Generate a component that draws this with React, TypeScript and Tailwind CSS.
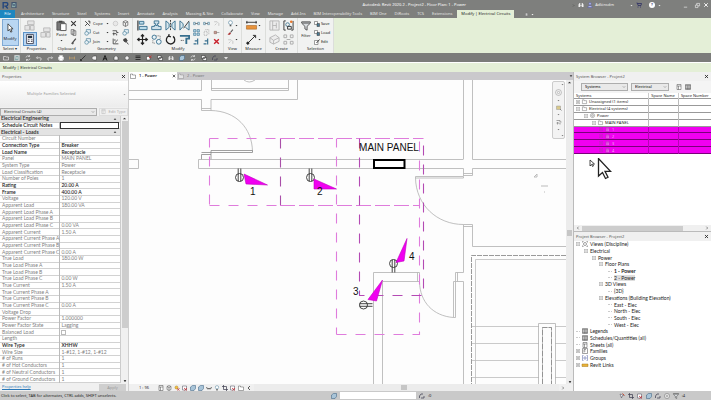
import type { ReactNode } from 'react'
import { ChevronDown, X } from 'lucide-react'

type PropRow = { k: string; v?: string; on?: boolean; head?: boolean }

const propRows: PropRow[] = [
  { k: 'Electrical Engineering', head: true },
  { k: 'Schedule Circuit Notes', on: true },
  { k: 'Electrical - Loads', head: true },
  { k: 'Circuit Number' },
  { k: 'Connection Type', v: 'Breaker', on: true },
  { k: 'Load Name', v: 'Receptacle', on: true },
  { k: 'Panel', v: 'MAIN PANEL' },
  { k: 'System Type', v: 'Power' },
  { k: 'Load Classification', v: 'Receptacle' },
  { k: 'Number of Poles', v: '1' },
  { k: 'Rating', v: '20.00 A', on: true },
  { k: 'Frame', v: '400.00 A', on: true },
  { k: 'Voltage', v: '120.00 V' },
  { k: 'Apparent Load', v: '180.00 VA' },
  { k: 'Apparent Load Phase A' },
  { k: 'Apparent Load Phase B' },
  { k: 'Apparent Load Phase C', v: '0.00 VA' },
  { k: 'Apparent Current', v: '1.50 A' },
  { k: 'Apparent Current Phase A' },
  { k: 'Apparent Current Phase B' },
  { k: 'Apparent Current Phase C', v: '0.00 A' },
  { k: 'True Load', v: '180.00 W' },
  { k: 'True Load Phase A' },
  { k: 'True Load Phase B' },
  { k: 'True Load Phase C', v: '0.00 W' },
  { k: 'True Current', v: '1.50 A' },
  { k: 'True Current Phase A' },
  { k: 'True Current Phase B' },
  { k: 'True Current Phase C', v: '0.00 A' },
  { k: 'Voltage Drop' },
  { k: 'Power Factor', v: '1.000000' },
  { k: 'Power Factor State', v: 'Lagging' },
  { k: 'Balanced Load' },
  { k: 'Length' },
  { k: 'Wire Type', v: 'XHHW', on: true },
  { k: 'Wire Size', v: '1-#12, 1-#12, 1-#12' },
  { k: '# of Runs', v: '1' },
  { k: '# of Hot Conductors', v: '1' },
  { k: '# of Neutral Conductors', v: '1' },
  { k: '# of Ground Conductors', v: '1' },
]

const ribbonTabs = [
  'Architecture', 'Structure', 'Steel', 'Systems', 'Insert', 'Annotate', 'Analysis', 'Massing & Site',
  'Collaborate', 'View', 'Manage', 'Add-Ins', 'BIM Interoperability Tools', 'BIM One', 'DiRoots', 'TCS', 'Extensions',
]

// every drawing sits on a 12 x 12 grid
const art: Record<string, ReactNode> = {
  arrow: <path d="M3.5 1v8.5l2-1.8 1.4 3.3 1.5-.7L7 7h2.7z" fill="#fff" stroke="#333" />,
  typeProps: <g stroke="#b9b9b9" fill="#e4e4e4"><path d="M4 1h7v4H4zM1 6h5v5H1zM7 6h4v5H7z" /></g>,
  props: <g><path d="M2 .5h8v11H2z" fill="#fff" stroke="#334" /><path d="M3.5 2h5v3h-5z" fill="#234" /><path d="M3.5 7h2M3.5 9h2M7 7h2M7 9h2" stroke="#334" /></g>,
  paste: <g><path d="M1 2h8v9H1z" fill="#777" stroke="#555" /><path d="M3 .8h4v2H3z" fill="#444" /><path d="M5 4h6v7.5H5z" fill="#fff" stroke="#555" /></g>,
  cutX: <path d="M2 2l8 8M10 2L5 7M2 10l3-3M8 8l2 2" stroke="#333" strokeWidth="1.8" />,
  copy: <path d="M2 1h5v8H2zM5 3h5v8H5z" fill="#eee" stroke="#444" />,
  brush: <g><path d="M10 1L5.5 6.5" stroke="#444" strokeWidth="2" /><path d="M2 10l2-4 3 2-2 3z" fill="#555" /></g>,
  cope: <path d="M2 2l8 8M2 10l4-4M7 2h3v4" fill="none" stroke="#333" strokeWidth="1.5" />,
  join: <g fill="#e6f0f5" stroke="#3d7591"><path d="M4 1h7v6H4z" /><circle cx="4.5" cy="7.5" r="3.2" /></g>,
  ghost: <circle cx="6" cy="6" r="4" fill="#e8e8e8" stroke="#bbb" />,
  cube: <path d="M2 3l4-2 4 2v6l-4 2-4-2zM2 3l4 2 4-2M6 5v6" fill="#eee" stroke="#444" />,
  wall: <path d="M1 3h7v3h3M3 6v5M1 8h6M8 8v3" fill="none" stroke="#444" strokeWidth="1.5" />,
  split: <path d="M2 1v9h9M5 8l5-5M5 2v3" fill="none" stroke="#444" strokeWidth="1.5" />,
  hammer: <path d="M3 2l4-1 2 4-3 2-3-2zM7 6l4 5" fill="#444" stroke="#444" strokeWidth="1.5" />,
  align: <g><path d="M1 .5v11" stroke="#333" strokeWidth="1.3" /><path d="M2.5 1.5h5v3h-5zM2.5 7h8.5v3.5H2.5z" fill="#bcdcea" stroke="#38708f" /></g>,
  offset: <g fill="#cfe2ec" stroke="#38708f"><path d="M3.5 1h5v3H7v2H5V4H3.5zM.8 7h3V5.5M8 5.5V7h3v3.5H.8V7" /></g>,
  mirror: <g><path d="M6 0v12" stroke="#333" strokeDasharray="2 1" /><path d="M1 1v10l3.500-3V4zM11 1v10L7.500 8V4z" fill="#d8e8ef" stroke="#38708f" /></g>,
  mirrorDraw: <g><path d="M1 1v10l3.500-4V4zM11 2v9L7 8" fill="#d8e8ef" stroke="#38708f" /><path d="M11 1L5 9" stroke="#333" /></g>,
  move: <path d="M6 1v10M1 6h10M4.3 2.7L6 .7l1.7 2M4.3 9.3l1.7 2 1.7-2M2.7 4.3L.7 6l2 1.7M9.3 4.3l2 1.7-2 1.7" fill="none" stroke="#222" strokeWidth="1.3" />,
  copy2: <g fill="#e9f3f7" stroke="#38708f"><circle cx="3.5" cy="3.5" r="2.3" /><circle cx="8.5" cy="8.5" r="2.6" /><path d="M6 2h4v3M2 7v3h3" fill="none" stroke="#666" strokeDasharray="1 1" /></g>,
  rotate: <path d="M4 2.2a4.6 4.6 0 1 0 4.8.4M4.5.2L4 2.4l2.4.8" fill="none" stroke="#222" strokeWidth="1.4" />,
  trim: <g><path d="M1 2h10v3H8v6" fill="none" stroke="#38708f" strokeWidth="2" /><path d="M2 7h4" stroke="#333" strokeDasharray="1 1" /></g>,
  dashes: <g stroke="#497b94" fill="#d8e8ef"><path d="M1 4h3v4H1zM8 4h3v4H8z" /><path d="M4 6h4" stroke="#333" /></g>,
  array: <g fill="#b5d8e7" stroke="#38708f"><path d="M1 1h4v4H1zM7 1h4v4H7zM1 7h4v4H1zM7 7h4v4H7z" /></g>,
  scale: <path d="M2 4h5v7H2zM4 1h6v8" fill="none" stroke="#999" strokeDasharray="2 1" />,
  trimOne: <path d="M1 10h5M8 1v10M3 5h4" fill="none" stroke="#38708f" strokeWidth="2" />,
  pinOff: <path d="M2 3h5l3 3v4M3 9l3-3" fill="none" stroke="#bbb" strokeWidth="1.3" />,
  pin: <g><path d="M2 4h4v4H2z" fill="#c99" stroke="#865" /><path d="M6 6h5" stroke="#777" /></g>,
  del: <path d="M2 2l8 8M10 2l-8 8" stroke="#c8202b" strokeWidth="2.4" />,
  bulb: <g><circle cx="6" cy="4.5" r="3.3" fill="#fff" stroke="#4b7d99" /><path d="M4.6 8.2h2.8v2.6H4.6z" fill="#555" /></g>,
  paint: <g><path d="M10 1L6 6" stroke="#555" strokeWidth="1.8" /><path d="M1 10l3-4 3 1-2 3z" fill="#a33" /></g>,
  dim: <g><path d="M0 2.5h12M1 1v3M11 1v3" stroke="#333" /><path d="M.5 6h11v4H.5z" fill="#e8933c" stroke="#a45e18" strokeWidth=".6" /></g>,
  dimAlign: <g stroke="#222"><path d="M2 10L10 2" /><circle cx="2" cy="10" r="1.2" fill="#222" /><path d="M7.5 1.5h3v3" fill="none" /></g>,
  assembly: <path d="M1 1h10v10H1zM4 1v10M8 3v6M4 6h4" fill="#ececec" stroke="#b5b5b5" />,
  parts: <path d="M1 4l6-3 4 3-6 3zM1 4v5l4 2V7M11 4v4l-6 3" fill="#ececec" stroke="#b5b5b5" />,
  group: <g fill="none" stroke="#333"><path d="M3 1H1v10h2M9 11h2V1" /><circle cx="5" cy="5" r="2" stroke="#497b94" /><path d="M5 7h4v3H5z" /><circle cx="9" cy="2" r="1.4" fill="#e8782c" stroke="none" /></g>,
  similar: <path d="M1 1h3v3H1zM8 1h3v3H8zM1 8h3v3H1zM8 8h3v3H8zM4 6h4" fill="none" stroke="#aaa" />,
  filter: <g><path d="M.8 1h10.4v1.6L7.3 6.4V11L4.7 9.5V6.4L.8 2.6z" fill="#d9dde0" stroke="#444" /><path d="M1.5 2.5h9" stroke="#444" /></g>,
  sel: <g><path d="M1 1h6v6H1z" fill="#fff" stroke="#444" /><path d="M6 5h5v6H6z" fill="#497b94" stroke="#333" /></g>,
  selEdit: <g><path d="M1 3h7v8H1z" fill="#fff" stroke="#444" /><path d="M11 1L5 8" stroke="#333" strokeWidth="1.8" /></g>,
  open: <path d="M1 3h4l1 1h5v6H1z" fill="none" stroke="currentColor" strokeWidth="1.4" />,
  save: <path d="M1 1h10v10H1zM3 1h6v4H3zM3 7h6v4" fill="#8aa" stroke="currentColor" />,
  sync: <path d="M2 5a4 4 0 0 1 7-2M10 7a4 4 0 0 1-7 2M9 0v3H6M3 12V9h3" fill="none" stroke="currentColor" strokeWidth="1.4" />,
  undo: <path d="M3 3L1 5.5 3.5 8M1 5.5h7a2.5 2.5 0 0 1 0 5" fill="none" stroke="currentColor" strokeWidth="1.4" />,
  redo: <path d="M9 3l2 2.5L8.500 8M11 5.500H4a2.500 2.500 0 0 0 0 5" fill="none" stroke="currentColor" strokeWidth="1.4" />,
  print: <path d="M3 1h6v3h2v5H9v2H3V9H1V4h2zM3 9V7h6v2" fill="#fff" stroke="currentColor" />,
  ruler: <path d="M1 3v6M11 3v6M1 6h10" stroke="#c9a56c" strokeWidth="1.4" />,
  line: <path d="M1 11L11 1M1 8v3h3" fill="none" stroke="#222" strokeWidth="1.5" />,
  tag: <path d="M1 6l4-4h6v8H5z" fill="#eee" stroke="#333" />,
  letter: <path d="M2 11L6 1l4 10M3.500 7.500h5" fill="none" stroke="#1c1c1c" strokeWidth="2" />,
  view3d: <path d="M2 5l4-4 4 4v5H2z" fill="#eee" stroke="#333" />,
  section: <path d="M6 1l5 5-5 5-5-5z" fill="#eee" stroke="#333" />,
  thin: <path d="M1 2h10M1 5h10M1 9h10" stroke="#222" strokeWidth="1.6" />,
  closeWin: <g><path d="M1 3h7v7H1z" fill="#fff" stroke="#333" /><path d="M6 1l5 5M11 1L6 6" stroke="#c33" strokeWidth="1.600" /></g>,
  wins: <path d="M1 1h7v6H1zM4 5h7v6H4z" fill="#eee" stroke="#222" />,
  find: <path d="M1 10V5l2-3h1.500v4h3V2H9l2 3v5H7.500V7h-3v3z" fill="currentColor" />,
  user: <g fill="#b8c0e8" stroke="#4b4f9a"><circle cx="6" cy="3.500" r="2.500" /><path d="M1.500 11c0-5 9-5 9 0z" /></g>,
  cart: <path d="M1 2h2l1 5h6l1-4H3.500M4 9v2M9 9v2" fill="none" stroke="#2d2f63" strokeWidth="1.600" />,
  min: <path d="M2 10h8" stroke="currentColor" strokeWidth="1.500" />,
  restore: <path d="M1 5h6v6H1zM4 5V1h7v6H7" fill="none" stroke="currentColor" strokeWidth="1.500" />,
  folder: <path d="M1 2h4v2h6v7H1z" fill="#fff" stroke="#555" />,
  sheet: <path d="M2 1h8v10H2zM2 4h8M5 4v7" fill="#fff" stroke="#444" />,
  grid: <path d="M1 1h10v10H1zM1 3h10M1 6h10M1 9h10M4.500 3v8M8 3v8" fill="#fff" stroke="#444" />,
  target: <g fill="#fff" stroke="#555"><circle cx="6" cy="6" r="5" /><circle cx="6" cy="6" r="2" /></g>,
  viewRoot: <g fill="none" stroke="#444"><circle cx="6" cy="6" r="3" /><path d="M1 3V1h2M9 1h2v2M11 9v2H9M3 11H1V9" /></g>,
  link: <path d="M0 4h12v5H0z" fill="#e9b23a" stroke="#a5791a" />,
  bracket: <path d="M3 1H1v10h2M9 1h2v10H9M4 4h4v4H4z" fill="none" stroke="#4b5ba0" />,
  family: <path d="M1 1h10v10H1zM4 9V3h4M4 6h3" fill="#fff" stroke="#444" />,
  sun: <g><circle cx="5" cy="5" r="3" fill="#f3c342" stroke="#a87a16" /><path d="M6 7l5 4M11 6L7 11" stroke="#b33" strokeWidth="1.400" /></g>,
  crop: <path d="M3 0v9h9M0 3h9v9" fill="none" stroke="#445" strokeWidth="1.500" />,
  redBox: <g><path d="M1 2h8v8H1z" fill="#fff" stroke="#445" /><path d="M4 6l6 5M10 6l-5 5" stroke="#c3343a" strokeWidth="1.600" /></g>,
  zoomBox: <g><path d="M1 2h8v7H1z" fill="#d9c98a" stroke="#999" /><path d="M8 8l3 3" stroke="#777" strokeWidth="1.600" /></g>,
  blueBox: <path d="M1 4l4-3h6v6l-3 4H1z" fill="#a8c4d8" stroke="#335a7c" />,
  glasses: <path d="M1 4l2 4h2l1-2 1 2h2l2-4" fill="none" stroke="#333" strokeWidth="1.400" />,
  chev: <path d="M8 2L4 6l4 4" fill="none" stroke="#333" strokeWidth="1.600" />,
  chevR: <path d="M4 2l4 4-4 4" fill="none" stroke="#333" strokeWidth="1.600" />,
  up: <path d="M2 8l4-4 4 4z" fill="#333" />,
  caret: <path d="M2 4h8L6 9z" fill="currentColor" />,
  pick: <g><path d="M2 2l7 3-3 1-1 4z" fill="#fff" stroke="#445" /><path d="M7 1l4 4" stroke="#cc4a32" strokeWidth="2" /></g>,
  handle: <path d="M1 10V6l3-4h4M4 10h6V6" fill="none" stroke="#445" strokeWidth="1.500" />,
}

function Ico({ n, c }: { n: string; c: string }) {
  return <svg viewBox="0 0 12 12" className={`block shrink-0 overflow-visible ${c}`}>{art[n]}</svg>
}

function Btn({ n, label, c = 'size-[7px]' }: { n: string; label: string; c?: string }) {
  return <button aria-label={label} className="flex items-center justify-center"><Ico n={n} c={c} /></button>
}

function Panel({ title, c, children }: { title: string; c: string; children: ReactNode }) {
  return (
    <section className={`flex shrink-0 flex-col border-r border-[#dcdedb] bg-[#f1f2f1] pt-px ${c}`}>
      <div className="flex flex-1 justify-center gap-[3px]">{children}</div>
      <h2 className="pb-px text-center font-normal leading-[6px]">{title}</h2>
    </section>
  )
}

function Stack({ items }: { items: string[] }) {
  return (
    <div className="flex flex-col justify-around">
      {items.map((n, i) => <Btn key={i} n={n} label={n} />)}
    </div>
  )
}

function Pair({ a, b }: { a: string; b: string }) {
  return (
    <div className="flex flex-col justify-around">
      <Btn n={a} label={a} c="size-[11px]" />
      <Btn n={b} label={b} c="size-[11px]" />
    </div>
  )
}

// drop-down arrows at the right of a panel's two button rows
function Carets() {
  return (
    <div className="-ml-0.5 flex flex-col justify-around">
      <Ico n="caret" c="size-[3px]" />
      <Ico n="caret" c="size-[3px]" />
    </div>
  )
}

function Drop({ label, value, c }: { label: string; value: string; c: string }) {
  return (
    <div className={`relative flex ${c}`}>
      <select aria-label={label} defaultValue={value} className="w-full appearance-none border border-[#adadad] bg-[#e9e9e9] px-[3px] leading-[6px]">
        <option>{value}</option>
      </select>
      <ChevronDown className="pointer-events-none absolute right-0.5 top-0.5 size-1 text-[#444]" />
    </div>
  )
}

function Ribbon() {
  return (
    <div className="flex h-[35px] bg-[#e4efd7] text-[#222]">
      <Panel title="Select ▾" c="w-[21px]">
        <button className="flex w-[17px] flex-col items-center justify-center gap-[3px] border border-[#7fa9d4] bg-[#b9d6f2]">
          <Ico n="arrow" c="size-[10px]" />
          Modify
        </button>
      </Panel>
      <Panel title="Properties" c="w-8">
        <div className="flex flex-col justify-around">
          <Btn n="typeProps" label="Type Properties" c="size-[11px]" />
          <button aria-label="Properties" className="border border-[#5c93c9] bg-[#b9d6f2] px-px py-px"><Ico n="props" c="size-[10px]" /></button>
        </div>
        <Btn n="typeProps" label="Family Types" c="size-[11px]" />
      </Panel>
      <Panel title="Clipboard" c="w-7">
        <button className="flex flex-col items-center gap-px pt-px">
          <Ico n="paste" c="size-[11px]" />
          Paste
          <Ico n="caret" c="size-[3px]" />
        </button>
        <Stack items={['cutX', 'copy', 'brush']} />
      </Panel>
      <Panel title="Geometry" c="w-[52px]">
        <div className="flex flex-col justify-around">
          {[['cope', 'Cope'], ['join', 'Cut'], ['join', 'Join']].map(([n, t]) => (
            <button key={t} className="flex w-[25px] items-center gap-0.5">
              <Ico n={n} c="size-[7px]" />
              <span className="w-[11px] text-left">{t}</span>
              <Ico n="caret" c="size-[3px]" />
            </button>
          ))}
        </div>
        <Stack items={['ghost', 'wall', 'split']} />
        <Stack items={['cube', 'join', 'hammer']} />
      </Panel>
      <Panel title="Modify" c="w-[91px]">
        <Pair a="align" b="move" />
        <Pair a="offset" b="copy2" />
        <Pair a="mirror" b="rotate" />
        <Pair a="mirrorDraw" b="trim" />
        <Stack items={['dashes', 'array', 'trimOne']} />
        <Stack items={['dashes', 'scale', 'trimOne']} />
        <Stack items={['pinOff', 'pin', 'del']} />
      </Panel>
      <Panel title="View" c="w-[18px]">
        <Stack items={['bulb', 'paint', 'pinOff']} />
        <Carets />
      </Panel>
      <Panel title="Measure" c="w-6">
        <Pair a="dim" b="dimAlign" />
        <Carets />
      </Panel>
      <Panel title="Create" c="w-8">
        <Pair a="assembly" b="parts" />
        <Pair a="group" b="similar" />
      </Panel>
      <Panel title="Selection" c="w-9">
        <button className="flex flex-col items-center gap-0.5 pt-0.5">
          <Ico n="filter" c="size-[10px]" />
          Filter
        </button>
        <div className="flex flex-col justify-around">
          {[['sel', 'Save'], ['sel', 'Load'], ['selEdit', 'Edit']].map(([n, t]) => (
            <button key={t} className="flex items-center gap-px"><Ico n={n} c="size-[6px]" />{t}</button>
          ))}
        </div>
      </Panel>
    </div>
  )
}

const quick = [
  'open', 'save', 'sync', 'undo', 'redo', 'print', 'ruler', 'line', 'tag', 'letter', 'view3d',
  'section', 'thin', 'closeWin', 'wins', 'find', 'blueBox', 'sync', 'wins', 'handle', 'caret',
]

function TopBars() {
  return (
    <header>
      <div className="flex h-[10px] items-center bg-[#7e7f7d] text-[#f0f0f0]">
        <div className="flex flex-1 items-center gap-0.5 pl-0.5">
          <svg viewBox="0 0 12 12" className="size-[7px]"><path d="M2 11V1h5a3 3 0 0 1 0 6H4M6 7l4 4" fill="none" stroke="#24467c" strokeWidth="2.400" /></svg>
          <Btn n="save" label="Save" c="size-[6px] text-[#2c3c60]" />
        </div>
        <h1 className="font-medium">Autodesk Revit 2020.2 - Project2 - Floor Plan: 1 - Power</h1>
        <div className="flex w-[245px] items-center justify-end gap-[3px] pr-0.5">
          <Ico n="chevR" c="size-[3px]" />
          <Btn n="find" label="Search" c="size-[6px]" />
          <button className="flex items-center gap-0.5"><Ico n="user" c="size-[6px]" />Adkinsdm</button>
          <span className="w-[10px]" />
          <Ico n="caret" c="size-[3px]" />
          <Btn n="cart" label="App Store" c="size-[6px]" />
          <span className="w-px" />
          <button className="flex size-[6px] items-center justify-center rounded-full bg-white font-bold text-[#3c3f78]">?</button>
          <Ico n="caret" c="size-[3px]" />
          <span className="w-4" />
          <Btn n="min" label="Minimize" c="size-[5px]" />
          <span className="w-px" />
          <Btn n="restore" label="Restore" c="size-[5px]" />
          <button aria-label="Close"><X strokeWidth={4} className="size-[6px]" /></button>
        </div>
      </div>
      <nav className="flex h-2 items-stretch bg-[#7e7f7d] text-[#e6e6e6]">
        <button className="mr-0.5 w-[15px] bg-[#1d86c0] text-white">File</button>
        {ribbonTabs.map(t => <button key={t} className="px-1">{t}</button>)}
        <button className="ml-px bg-[#e4efd7] px-1 text-[#222]">Modify | Electrical Circuits</button>
        <span className="ml-[10px] flex items-center gap-0.5 text-white"><Btn n="sheet" label="Panel display" c="h-[3px] w-[5px]" /><Ico n="caret" c="size-[3px]" /></span>
      </nav>
      <Ribbon />
      <div className="flex h-[10px] items-center gap-[5px] border-b border-white bg-[#7b7c7a] pl-[3px] text-[#e2e2e2]">
        {quick.map((n, i) => <Btn key={i} n={n} label={n} c="size-[6px]" />)}
      </div>
      <div className="h-[9px] bg-[#e4efd7] pl-[3px] leading-[9px] text-[#222]">Modify | Electrical Circuits</div>
    </header>
  )
}

function PanelTitle({ children }: { children: string }) {
  return (
    <div className="flex h-[9px] shrink-0 items-center justify-between bg-[#f0f0f0] px-0.5 text-[#555]">
      <h2 className="font-normal">{children}</h2>
      <button aria-label={`Close ${children}`}><X strokeWidth={4} className="size-[5px] text-[#222]" /></button>
    </div>
  )
}

function Properties() {
  return (
    <aside className="flex w-[129px] shrink-0 flex-col border-r border-[#cfcfcf] bg-[#f0f0f0]">
      <PanelTitle>Properties</PanelTitle>
      <button className="flex h-[26px] items-center justify-between bg-linear-to-b from-white to-[#ececec] pl-[27px] pr-0.5 text-[#999]">
        Multiple Families Selected
        <Ico n="caret" c="size-[3px]" />
      </button>
      <div className="flex h-[9px] items-center gap-0.5 text-[#333]">
        <Drop label="Selection" value="Electrical Circuits (4)" c="w-[97px]" />
        <button className="flex flex-1 items-center justify-center gap-0.5 border border-[#ddd] text-[#aaa]"><Ico n="sheet" c="size-[5px] opacity-40" />Edit Type</button>
      </div>
      <div className="flex h-[267px]">
        <table className="h-full flex-1 table-fixed border-collapse bg-white font-['Lato','Open_Sans',sans-serif] text-[5px]">
          <colgroup>
            <col className="w-[59px]" />
            <col />
          </colgroup>
          <tbody>
            {propRows.map(r => r.head ? (
              <tr key={r.k} className="border-b border-[#ccc] bg-[#e3e3e3] text-[#333]">
                <th colSpan={2} className="p-0 pl-px text-left font-bold leading-[5px]">
                  <div className="flex items-center justify-between pr-[3px]">{r.k}<Ico n="up" c="size-[4px]" /></div>
                </th>
              </tr>
            ) : (
              <tr key={r.k} className={`border-b border-[#d2d2d2] leading-[5px] ${r.on ? 'text-[#222]' : 'text-[#808080]'}`}>
                <th className={`border-r border-[#bbb] p-0 pl-0.5 text-left ${r.on ? 'font-semibold' : 'font-normal'}`}>{r.k}</th>
                <td className={`p-0 pl-px ${r.on ? 'font-semibold' : ''}`}>
                  {r.k === 'Schedule Circuit Notes' && <input aria-label={r.k} className="block h-[5px] w-[57px] outline outline-[#333]" />}
                  {r.k === 'Balanced Load' && <input type="checkbox" aria-label={r.k} className="block size-[5px] appearance-none border border-[#bbb]" />}
                  {r.v}
                </td>
              </tr>
            ))}
          </tbody>
        </table>
        <div className="flex w-2 flex-col items-center border-l border-[#ccc] bg-[#f0f0f0]">
          <Ico n="up" c="size-[5px]" />
          <div className="h-[207px] w-[6px] bg-[#cdcdcd]" />
          <span className="flex-1" />
          <Ico n="caret" c="size-[4px]" />
        </div>
      </div>
      <div className="flex h-2 items-center justify-between px-0.5">
        <a href="#help" className="text-[#2a78b8] underline">Properties help</a>
        <button className="w-[27px] bg-[#cfcfcf] leading-[7px] text-[#999]">Apply</button>
      </div>
    </aside>
  )
}

function Receptacle({ at }: { at: string }) {
  return (
    <g transform={at} fill="none" stroke="#333" strokeWidth=".9">
      <circle r="4" />
      <path d="M-1.300 4V-9M1.300 4V-9" />
    </g>
  )
}

// drawing units are window pixels; the group shifts them to the view's corner
function FloorPlan() {
  return (
    <svg className="block h-full w-full bg-[#fdfdfd]">
      <g transform="translate(-129 -80)" fill="none">
        <g stroke="#b0b0b0" strokeWidth=".8">
          <path d="M129 90.500H201.500V80M129 99.500H201.500V110.500H211V99.500H297.500V80M201.500 108.500H211M211.500 80V90.500H288.500V80M211 88.500H288" />
          <path d="M244 80q5 4 11 0" />
          <path d="M211 110.500C236 111 252 128 252.500 151.500" />
          <path d="M211 150.500h41.500v2H211zM211 154.500h-9.500V159.500M201.500 152.500h9.500v7" stroke="#888" />
          <path d="M129 159.500h9.500v9H129M463 159.500H198.500v9H463.500V176M472.500 159.500H572M472.500 168.500H572M463.500 80V159.500M472.500 80V159.500M472.500 168.500V175.500H463.500M463.500 173.500h9" />
          <path d="M415.500 176.500H463.500v1.500H415.500zM415.500 178C416 205 437 224.500 463.500 224.500" />
          <path d="M463.500 272.500V224.500h9V246.500H572M463.500 226.500h9M463.500 272.500H455.500v9h8V384M457.500 272.500v9" />
          <path d="M453.500 281.500h2V317.500h-2zM419.500 282C420 302 433 316 453.500 317.500" />
          <path d="M373.500 384V272.500H419.500V281.500H382.500V384M417.500 272.500v9" />
          <path d="M572 259.500H475.500V384M472 326.500H539M472 343.500H539M472 360.500H539M472 377.500H539M555 343.500H572M555 360.500H572M555 377.500H572M555 326.500H572" stroke="#bdbdbd" />
          <path d="M538.500 384V323.500h17V384M542.500 384V327.500h9V384" />
        </g>
        <path d="M572 255.500H471.500V384" stroke="#9a9a9a" strokeDasharray="5 1" />
        <path d="M542.500 384V327.500h9V384" stroke="#888" strokeDasharray="5 2" strokeWidth=".8" />
        <path d="M534 177l3-3v3zM541 186h7M544 192h1" stroke="#bbb" />

        <g stroke="#df7cdc" strokeWidth="1.100" strokeDasharray="10 9">
          <path d="M209.500 138.500V205M209.500 138.500H280" strokeDashoffset="1" />
          <path d="M209.500 205.500H280" />
          <path d="M280.500 138.500V205" stroke="#a94fa9" />
          <path d="M280 138.500H423.500M280 205.500H419.500" strokeDasharray="15 4" />
          <path d="M336.500 138.500V334.500" strokeDashoffset="1" />
          <path d="M336.500 334.500H419.500V138.500" />
          <path d="M359.500 138.500V295.500H423.500V138.500" stroke="#b44ab4" />
        </g>

        <Receptacle at="translate(239.500 177.500)" />
        <Receptacle at="translate(310.500 177.500)" />
        <Receptacle at="translate(393.500 263.500) rotate(180)" />
        <Receptacle at="translate(363.500 305) rotate(90)" />

        <path d="M244 174l23.500 11-21.500-1zM314 179l22.500 10H314zM407 238.500l-3 22.500-8 1.500zM382.500 280l-6 21-8.500-1.500z" fill="#f000f0" stroke="#c000c0" strokeWidth=".6" />
        <path d="M374 160h30.500v8H374z" fill="#fff" stroke="#000" strokeWidth="2" />

        <g fill="#111" fontFamily="Liberation Sans, sans-serif" fontSize="10">
          <text x="389" y="151" textAnchor="middle">MAIN PANEL</text>
          <text x="250" y="195">1</text>
          <text x="317" y="195">2</text>
          <text x="353" y="295">3</text>
          <text x="409" y="260">4</text>
        </g>
      </g>
    </svg>
  )
}

function Canvas() {
  return (
    <main className="flex min-w-0 flex-1 flex-col bg-[#f0f0f0]">
      <div className="flex h-2 shrink-0 bg-[#cac9cc] text-[#222]">
        <button className="flex w-12 items-center gap-[3px] bg-white px-px"><Ico n="folder" c="size-[6px]" /><b className="flex-1 text-left font-semibold">1 - Power</b><X strokeWidth={4} className="size-[4px]" /></button>
        <button className="flex items-center gap-[3px] pl-px text-[#777]"><Ico n="folder" c="size-[6px] opacity-50" />2 - Power</button>
        <span className="ml-auto flex items-center"><Ico n="caret" c="size-[4px] text-[#333]" /></span>
      </div>
      <div className="flex min-h-0 flex-1">
        <div className="relative min-w-0 flex-1">
          <FloorPlan />
          <div className="absolute right-px top-px flex h-[58px] w-[13px] flex-col items-center justify-around rounded-xs border border-[#ccc] bg-[#f3f3f3] text-[#777]">
            <Ico n="caret" c="size-[3px] self-end" />
            <Btn n="target" label="Steering wheel" c="size-[7px] opacity-60" />
            <Ico n="caret" c="size-[3px]" />
            <Btn n="zoomBox" label="Zoom region" c="size-[6px]" />
            <Ico n="caret" c="size-[3px]" />
            <Btn n="wall" label="Pan" c="size-[6px] opacity-60" />
            <Ico n="caret" c="size-[3px]" />
            <Ico n="caret" c="size-[3px] self-end" />
          </div>
        </div>
        <div className="flex w-[7px] flex-col items-center bg-[#ececec]">
          <Ico n="up" c="size-[5px]" />
          <span className="h-[145px]" />
          <div className="h-[6px] w-[5px] bg-[#c6c6c6]" />
          <span className="flex-1" />
          <Ico n="caret" c="size-[4px]" />
        </div>
      </div>
      <div className="flex h-[7px] shrink-0 items-center gap-0.5 pl-[10px] text-[#333]">
        <span className="w-[17px]">1 : 96</span>
        {['sheet', 'cube', 'sun', 'redBox', 'blueBox', 'blueBox', 'glasses', 'bulb', 'crop', 'redBox', 'folder', 'chev'].map((n, i) => (
          <Btn key={i} n={n} label={n} c="size-[6px]" />
        ))}
        <div className="flex flex-1 self-stretch bg-[#ececec] pl-[147px]"><div className="my-px w-[6px] bg-[#c6c6c6]" /></div>
        <Ico n="chevR" c="mr-2 size-[4px]" />
      </div>
    </main>
  )
}

type Node = { d: number; t: string; icon?: string; bold?: boolean; sel?: boolean; leaf?: boolean; plus?: boolean }

const project: Node[] = [
  { d: 0, t: 'Views (Discipline)', icon: 'viewRoot' },
  { d: 1, t: 'Electrical' },
  { d: 2, t: 'Power' },
  { d: 3, t: 'Floor Plans' },
  { d: 4, t: '1 - Power', bold: true, leaf: true },
  { d: 4, t: '2 - Power', sel: true, leaf: true },
  { d: 3, t: '3D Views' },
  { d: 4, t: '{3D}', leaf: true },
  { d: 3, t: 'Elevations (Building Elevation)' },
  { d: 4, t: 'East - Elec', leaf: true },
  { d: 4, t: 'North - Elec', leaf: true },
  { d: 4, t: 'South - Elec', leaf: true },
  { d: 4, t: 'West - Elec', leaf: true },
  { d: 0, t: 'Legends', icon: 'grid', leaf: true },
  { d: 0, t: 'Schedules/Quantities (all)', icon: 'grid', leaf: true },
  { d: 0, t: 'Sheets (all)', icon: 'sheet', leaf: true },
  { d: 0, t: 'Families', icon: 'family', plus: true },
  { d: 0, t: 'Groups', icon: 'bracket', plus: true },
  { d: 0, t: 'Revit Links', icon: 'link', plus: true },
]

const indent = ['pl-0.5', 'pl-[10px]', 'pl-[18px]', 'pl-[25px]', 'pl-[34px]']

const systems: Node[] = [
  { d: 0, t: 'Unassigned (1 items)', icon: 'folder', plus: true },
  { d: 0, t: 'Electrical (4 systems)', icon: 'folder' },
  { d: 1, t: 'Power', icon: 'target' },
  { d: 2, t: 'MAIN PANEL', icon: 'folder' },
  { d: 3, t: '1', icon: 'sheet', sel: true, plus: true },
  { d: 3, t: '2', icon: 'sheet', sel: true, plus: true },
  { d: 3, t: '3', icon: 'sheet', sel: true, plus: true },
  { d: 3, t: '4', icon: 'sheet', sel: true, plus: true },
]

function Toggle({ plus, sel }: { plus?: boolean; sel?: boolean }) {
  return (
    <svg viewBox="0 0 8 8" className="block size-1 shrink-0" fill={sel ? 'none' : '#fff'} stroke={sel ? '#b030b0' : '#777'}>
      <path d={plus ? 'M.500 .500h7v7h-7zM2 4h4M4 2v4' : 'M.500 .500h7v7h-7zM2 4h4'} />
    </svg>
  )
}

function SystemBrowser() {
  return (
    <section className="relative flex h-[160px] flex-col border-b border-[#bbb] bg-white">
      <PanelTitle>System Browser - Project2</PanelTitle>
      <div className="flex h-3 items-center gap-[3px] bg-[#f4f4f4] pl-[7px]">
        <Drop label="View" value="Systems" c="w-[47px]" />
        <Drop label="Discipline" value="Electrical" c="w-[38px]" />
        <span className="w-px" />
        <Btn n="sheet" label="Autofit" c="size-[6px]" />
        <Btn n="grid" label="Column settings" c="size-[6px]" />
      </div>
      <table className="h-[61px] w-full table-fixed border-collapse text-[#222]">
        <thead>
          <tr className="border-b border-[#999] leading-[5px]">
            <th className="p-0 pl-0.5 text-left font-normal">Systems</th>
            <th className="w-[30px] border-x border-[#ccc] p-0 text-center font-normal">Space Name</th>
            <th className="w-[33px] p-0 text-center font-normal">Space Number</th>
          </tr>
        </thead>
        <tbody>
          {systems.map(s => (
            <tr key={s.t} className={`border-b leading-[5px] ${s.sel ? 'border-[#7a007a] bg-[#f000f0] text-[#f0a8f0]' : 'border-[#999]'}`}>
              <td className="p-0">
                <span className={`flex items-center gap-0.5 ${indent[s.d]}`}>
                  <Toggle plus={s.plus} sel={s.sel} />
                  <Ico n={s.icon!} c={s.sel ? 'size-[5px] opacity-40' : 'size-[5px]'} />
                  {s.t}
                </span>
              </td>
              <td className={`border-x p-0 ${s.sel ? 'border-[#b800b8]' : 'border-[#bbb]'}`} />
              <td className="p-0" />
            </tr>
          ))}
        </tbody>
      </table>
      <div className="mt-auto flex h-[6px] items-center bg-[#f0f0f0] px-0.5">
        <Ico n="chev" c="size-[4px]" />
        <div className="mx-0.5 h-[5px] w-[101px] bg-[#cdcdcd]" />
        <Ico n="chevR" c="ml-auto size-[4px]" />
      </div>
      <svg className="pointer-events-none absolute left-[14px] top-[86px] h-6 w-7" fill="#fff" stroke="#222">
        <path d="M2 2v6l1.500-1.500 1 2 1-.5-1-2h2z" strokeWidth=".8" />
        <path d="M10.500 .500v17.500l4-3.500 3 6 2.500-1.200-3-6h5.500z" strokeWidth="1.300" />
      </svg>
    </section>
  )
}

function ProjectBrowser() {
  return (
    <section className="flex flex-1 flex-col bg-white">
      <PanelTitle>Project Browser - Project2</PanelTitle>
      <ul className="flex h-[127px] flex-col font-['Lato','Open_Sans',sans-serif] text-[5px] text-[#222]">
        {project.map(p => (
          <li key={p.t} className={`flex flex-1 items-center gap-0.5 leading-[6px] ${indent[p.d]} ${p.bold ? 'font-bold' : ''}`}>
            {p.leaf ? <span className="w-1 shrink-0 border-t border-dotted border-[#ccc]" /> : <Toggle plus={p.plus} />}
            {p.icon && <Ico n={p.icon} c="size-[6px]" />}
            <span className={p.sel ? 'bg-[#dedede]' : ''}>{p.t}</span>
          </li>
        ))}
      </ul>
    </section>
  )
}

export default function App() {
  return (
    <div className="flex min-h-screen flex-col overflow-hidden whitespace-nowrap bg-[#f0f0f0] font-['Noto_Sans','Open_Sans',sans-serif] text-[4px] leading-[6px]">
      <TopBars />
      <div className="flex flex-1">
        <Properties />
        <Canvas />
        <div className="flex w-[138px] shrink-0 flex-col border-l border-[#bbb]">
          <SystemBrowser />
          <ProjectBrowser />
        </div>
      </div>
      <footer className="flex h-[9px] items-center justify-between bg-[#c9c9c9] pl-px text-[#222]">
        <span className="w-[330px]">Click to select, TAB for alternates, CTRL adds, SHIFT unselects.</span>
        <div className="flex flex-1 items-center gap-[3px]">
          <Ico n="blueBox" c="size-[6px]" />
          <select aria-label="Workset" className="h-[7px] w-[76px] appearance-none bg-white" />
          <Ico n="handle" c="size-[6px]" />
          :0
        </div>
        <div className="flex items-center gap-[3px] pr-[26px]">
          {['pick', 'crop', 'redBox', 'blueBox', 'handle', 'target', 'filter'].map(n => <Btn key={n} n={n} label={n} c="size-[6px]" />)}
          :4
        </div>
      </footer>
    </div>
  )
}
